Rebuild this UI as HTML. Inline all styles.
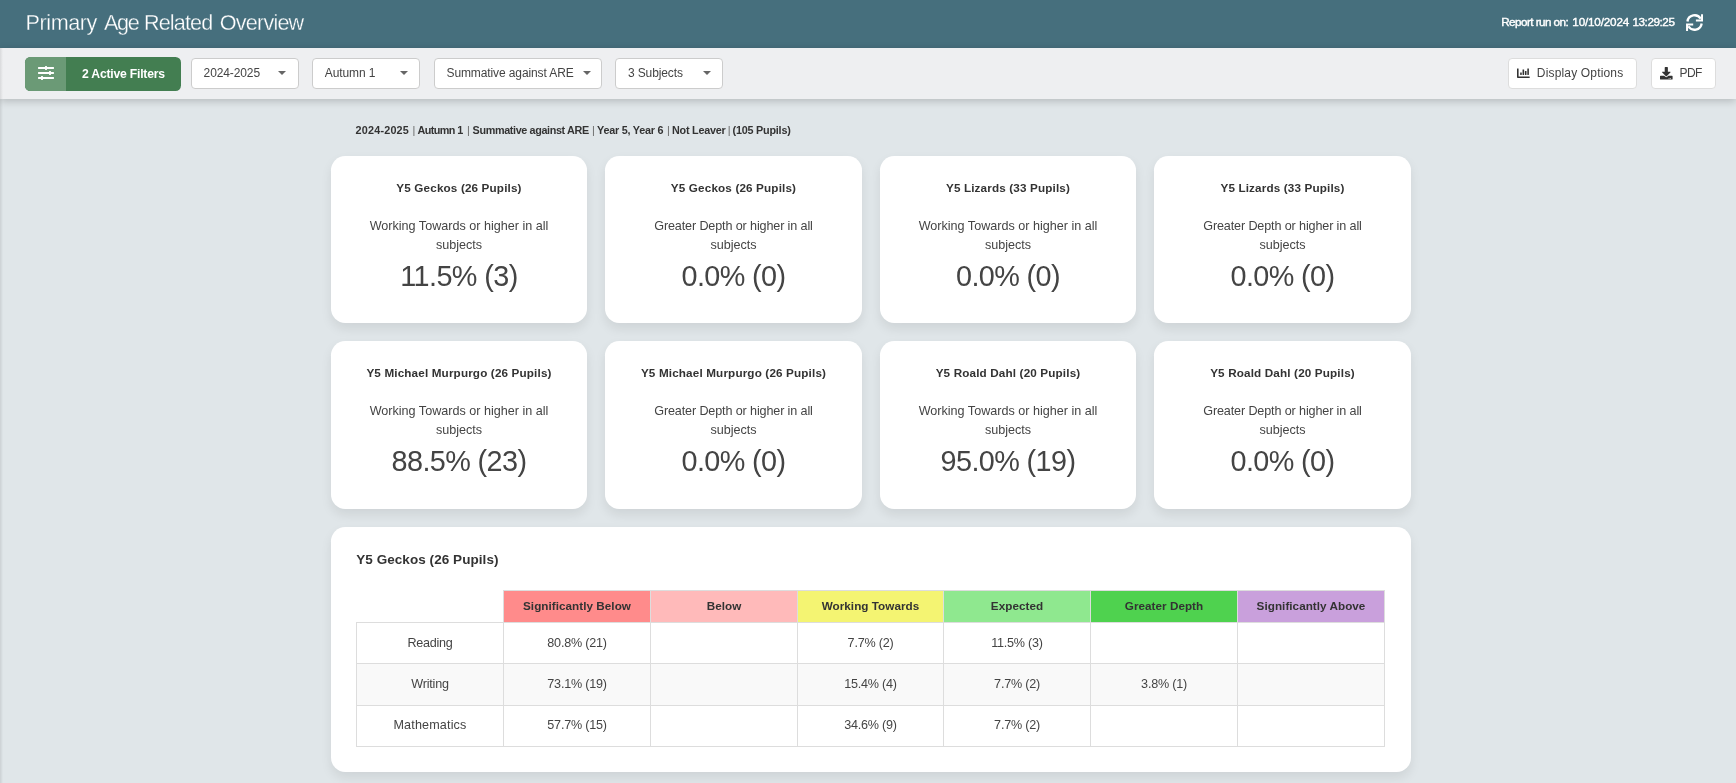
<!DOCTYPE html>
<html>
<head>
<meta charset="utf-8">
<title>Primary Age Related Overview</title>
<style>
html,body{margin:0;padding:0;}
body{width:1736px;height:783px;overflow:hidden;position:relative;background:#e0e6e9;font-family:"Liberation Sans",sans-serif;font-size:12px;line-height:1;color:#333;}
div{box-sizing:border-box;}
#root{position:absolute;left:0;top:0;width:1736px;height:783px;overflow:hidden;will-change:transform;}
.abs{position:absolute;}
.t{position:absolute;white-space:nowrap;line-height:1;}
#hdr{left:0;top:0;width:1736px;height:48px;background:#466f7d;}
#bar{left:0;top:48px;width:1736px;height:51px;background:#eeeff1;box-shadow:0 2px 8px rgba(0,0,0,0.20);}
.tw{top:12.1px;font-size:21.6px;color:#fff;-webkit-text-stroke:0.3px #466f7d;}
.rw{top:16.4px;font-size:11.7px;letter-spacing:-0.4px;color:#fff;font-weight:normal;-webkit-text-stroke:0.4px #fff;}
#fbtn{left:25px;top:57px;width:156px;height:34px;border-radius:5.5px;background:#437e51;overflow:hidden;}
#fbtn .ic{position:absolute;left:0;top:0;width:40.8px;height:34px;background:#6b9a76;}
#fbtn .lb{left:57px;top:10.5px;font-size:12.2px;letter-spacing:-0.21px;font-weight:bold;color:#fff;}
.dd{position:absolute;top:58px;height:31px;background:#fff;border:1px solid #ccc;border-radius:4px;}
.dd .t{top:7.9px;font-size:12px;letter-spacing:-0.11px;color:#444;}
.dd .ar{position:absolute;top:11.8px;width:0;height:0;border-left:4.1px solid transparent;border-right:4.1px solid transparent;border-top:4.3px solid #666;}
.btn{position:absolute;top:58px;height:31px;background:#fff;border:1px solid #ddd;border-radius:4px;}
.btn .t{top:7.9px;font-size:12px;color:#444;}
.cr{top:124.7px;font-size:10.8px;font-weight:bold;color:#333;}
.cp{top:124.7px;font-size:10.8px;color:#666;}
.card{position:absolute;width:256.5px;height:166.7px;background:#fff;border-radius:14.4px;box-shadow:0 5.4px 11px rgba(0,0,0,0.08);}
.card div{position:absolute;left:0;width:100%;text-align:center;white-space:nowrap;}
.card .h{top:26.3px;font-size:11.7px;font-weight:bold;letter-spacing:0.15px;color:#333;line-height:1;}
.card .d{top:61.2px;font-size:12.6px;color:#444;line-height:18.7px;}
.card .n{top:106.3px;font-size:28.8px;letter-spacing:-0.6px;color:#444;line-height:1;}
#tc{left:331px;top:527px;width:1080px;height:245px;background:#fff;border-radius:14.4px;box-shadow:0 5.4px 11px rgba(0,0,0,0.08);}
#tct{left:356.2px;top:553.0px;font-size:13.5px;letter-spacing:0.06px;font-weight:bold;color:#333;}
.vl{position:absolute;width:1px;background:#ddd;}
.hl{position:absolute;height:1px;background:#ddd;}
.th{position:absolute;text-align:center;font-size:11.7px;font-weight:bold;letter-spacing:0.04px;color:#333;line-height:1;white-space:nowrap;border:1px solid #ddd;}
.td{position:absolute;text-align:center;font-size:12.6px;color:#444;line-height:1;white-space:nowrap;}
.num{letter-spacing:-0.23px;}
svg{position:absolute;display:block;}
</style>
</head>
<body>
<div id="root">
<div id="hdr" class="abs"></div>
<div id="bar" class="abs"></div>
<div class="abs" style="left:0;top:48px;width:2.5px;height:735px;background:linear-gradient(to right,rgba(0,0,0,0.09),rgba(0,0,0,0));"></div>
<div class="t tw" style="left:25.6px;letter-spacing:-0.45px;">Primary</div>
<div class="t tw" style="left:104.0px;letter-spacing:-1.34px;">Age</div>
<div class="t tw" style="left:143.9px;letter-spacing:-0.84px;">Related</div>
<div class="t tw" style="left:219.8px;letter-spacing:-0.8px;">Overview</div>
<div class="t rw" style="left:1501.2px;letter-spacing:-0.55px;">Report run on:</div>
<div class="t rw" style="left:1572.3px;letter-spacing:-0.17px;">10/10/2024</div>
<div class="t rw" style="left:1632.4px;letter-spacing:-0.42px;">13:29:25</div>
<svg style="left:1685.9px;top:13.8px;" width="17.2" height="17.2" viewBox="0 0 17.2 17.2" fill="none" stroke="#fff" stroke-width="2"><path stroke-width="2.3" d="M1.42 7.5A7.2 7.2 0 0 1 14.7 4.75"/><path d="M9.9 6.42H16.05V0.3"/><path stroke-width="2.3" d="M15.68 9.5A7.2 7.2 0 0 1 2.4 12.25"/><path d="M7.2 10.58H1.05V16.9"/></svg>
<div id="fbtn" class="abs"><div class="ic"></div><div class="t lb" id="fl">2 Active Filters</div></div>
<svg style="left:37.9px;top:64.9px;" width="16" height="16" viewBox="0 0 512 512"><path fill="#fff" d="M496 384H160v-16c0-8.800-7.200-16-16-16h-32c-8.800 0-16 7.200-16 16v16H16c-8.800 0-16 7.200-16 16v32c0 8.800 7.200 16 16 16h80v16c0 8.800 7.200 16 16 16h32c8.800 0 16-7.200 16-16v-16h336c8.800 0 16-7.200 16-16v-32c0-8.800-7.200-16-16-16zm0-160h-80v-16c0-8.800-7.200-16-16-16h-32c-8.800 0-16 7.200-16 16v16H16c-8.800 0-16 7.200-16 16v32c0 8.800 7.200 16 16 16h336v16c0 8.800 7.200 16 16 16h32c8.800 0 16-7.200 16-16v-16h80c8.800 0 16-7.200 16-16v-32c0-8.800-7.200-16-16-16zm0-160H288V48c0-8.800-7.200-16-16-16h-32c-8.800 0-16 7.200-16 16v16H16C7.200 64 0 71.200 0 80v32c0 8.800 7.200 16 16 16h208v16c0 8.800 7.200 16 16 16h32c8.800 0 16-7.200 16-16v-16h208c8.800 0 16-7.200 16-16V80c0-8.800-7.200-16-16-16z"/></svg>
<div class="dd" style="left:191px;width:108.0px;"><div class="t" id="d1" style="left:11.6px;">2024-2025</div><div class="ar" style="left:86.4px;"></div></div>
<div class="dd" style="left:312px;width:108.0px;"><div class="t" id="d2" style="left:11.8px;">Autumn 1</div><div class="ar" style="left:87.2px;"></div></div>
<div class="dd" style="left:434px;width:168.0px;"><div class="t" id="d3" style="left:11.5px;">Summative against ARE</div><div class="ar" style="left:147.5px;"></div></div>
<div class="dd" style="left:615px;width:108.0px;"><div class="t" id="d4" style="left:11.9px;">3 Subjects</div><div class="ar" style="left:87.4px;"></div></div>
<div class="btn" style="left:1508px;width:129px;"><div class="t" id="b1" style="left:27.8px;letter-spacing:0.17px;">Display Options</div></div>
<svg style="left:1516.9px;top:66.6px;" width="12.7" height="12.7" viewBox="0 0 512 512"><path fill="#333" d="M332.8 320h38.4c6.4 0 12.8-6.4 12.8-12.8V172.800c0-6.400-6.400-12.800-12.800-12.800h-38.400c-6.400 0-12.800 6.400-12.800 12.800v134.400c0 6.400 6.400 12.800 12.800 12.800zm96 0h38.400c6.400 0 12.800-6.400 12.800-12.800V76.800c0-6.400-6.400-12.800-12.800-12.800h-38.400c-6.400 0-12.800 6.400-12.800 12.800v230.400c0 6.400 6.400 12.800 12.800 12.800zm-288 0h38.400c6.400 0 12.800-6.400 12.800-12.800v-70.400c0-6.400-6.400-12.800-12.800-12.800h-38.400c-6.400 0-12.800 6.400-12.800 12.800v70.400c0 6.400 6.400 12.800 12.800 12.800zm96 0h38.400c6.400 0 12.800-6.400 12.800-12.800V108.800c0-6.400-6.400-12.800-12.800-12.800h-38.400c-6.400 0-12.800 6.400-12.800 12.800v198.400c0 6.400 6.400 12.800 12.800 12.800zM496 384H64V80c0-8.840-7.160-16-16-16H16C7.160 64 0 71.160 0 80v336c0 17.670 14.330 32 32 32h464c8.840 0 16-7.160 16-16v-32c0-8.840-7.160-16-16-16z"/></svg>
<div class="btn" style="left:1651px;width:65px;"><div class="t" id="b2" style="left:27.4px;letter-spacing:-0.5px;">PDF</div></div>
<svg style="left:1660.2px;top:67.1px;" width="12.6" height="12.6" viewBox="0 0 512 512"><path fill="#333" d="M216 0h80c13.3 0 24 10.7 24 24v168h87.7c17.8 0 26.7 21.5 14.1 34.1L269.7 378.3c-7.5 7.5-19.8 7.5-27.3 0L90.1 226.1c-12.6-12.6-3.7-34.1 14.1-34.1H192V24c0-13.3 10.7-24 24-24zm296 376v112c0 13.3-10.7 24-24 24H24c-13.3 0-24-10.7-24-24V376c0-13.300 10.700-24 24-24h146.700l49 49c20.100 20.100 52.500 20.100 72.600 0l49-49H488c13.300 0 24 10.700 24 24zm-124 88c0-11-9-20-20-20s-20 9-20 20 9 20 20 20 20-9 20-20zm64 0c0-11-9-20-20-20s-20 9-20 20 9 20 20 20 20-9 20-20z"/></svg>
<div class="t cr" style="left:355.6px;letter-spacing:0.2px;">2024-2025</div>
<div class="t cr" style="left:417.6px;letter-spacing:-0.59px;">Autumn 1</div>
<div class="t cr" style="left:472.6px;letter-spacing:-0.365px;">Summative against ARE</div>
<div class="t cr" style="left:597.0px;letter-spacing:-0.22px;">Year 5, Year 6</div>
<div class="t cr" style="left:672.0px;letter-spacing:-0.22px;">Not Leaver</div>
<div class="t cr" style="left:732.6px;letter-spacing:-0.22px;">(105 Pupils)</div>
<div class="t cp" style="left:412.4px;">|</div>
<div class="t cp" style="left:467.0px;">|</div>
<div class="t cp" style="left:592.1px;">|</div>
<div class="t cp" style="left:666.9px;">|</div>
<div class="t cp" style="left:727.7px;">|</div>
<div class="card" style="left:331px;top:156px;width:256px;height:166.7px;"><div class="h" id="ch0">Y5 Geckos (26 Pupils)</div><div class="d"><span id="cd0">Working Towards or higher in all</span><br><span id="ce0">subjects</span></div><div class="n"><span id="cn0">11.5% (3)</span></div></div>
<div class="card" style="left:605px;top:156px;width:257px;height:166.7px;"><div class="h" id="ch1">Y5 Geckos (26 Pupils)</div><div class="d"><span id="cd1" style="letter-spacing:-0.13px">Greater Depth or higher in all</span><br><span id="ce1">subjects</span></div><div class="n"><span id="cn1">0.0% (0)</span></div></div>
<div class="card" style="left:880px;top:156px;width:256px;height:166.7px;"><div class="h" id="ch2">Y5 Lizards (33 Pupils)</div><div class="d"><span id="cd2">Working Towards or higher in all</span><br><span id="ce2">subjects</span></div><div class="n"><span id="cn2">0.0% (0)</span></div></div>
<div class="card" style="left:1154px;top:156px;width:257px;height:166.7px;"><div class="h" id="ch3">Y5 Lizards (33 Pupils)</div><div class="d"><span id="cd3" style="letter-spacing:-0.13px">Greater Depth or higher in all</span><br><span id="ce3">subjects</span></div><div class="n"><span id="cn3">0.0% (0)</span></div></div>
<div class="card" style="left:331px;top:341px;width:256px;height:168px;"><div class="h" id="ch4">Y5 Michael Murpurgo (26 Pupils)</div><div class="d"><span id="cd4">Working Towards or higher in all</span><br><span id="ce4">subjects</span></div><div class="n"><span id="cn4">88.5% (23)</span></div></div>
<div class="card" style="left:605px;top:341px;width:257px;height:168px;"><div class="h" id="ch5">Y5 Michael Murpurgo (26 Pupils)</div><div class="d"><span id="cd5" style="letter-spacing:-0.13px">Greater Depth or higher in all</span><br><span id="ce5">subjects</span></div><div class="n"><span id="cn5">0.0% (0)</span></div></div>
<div class="card" style="left:880px;top:341px;width:256px;height:168px;"><div class="h" id="ch6">Y5 Roald Dahl (20 Pupils)</div><div class="d"><span id="cd6">Working Towards or higher in all</span><br><span id="ce6">subjects</span></div><div class="n"><span id="cn6">95.0% (19)</span></div></div>
<div class="card" style="left:1154px;top:341px;width:257px;height:168px;"><div class="h" id="ch7">Y5 Roald Dahl (20 Pupils)</div><div class="d"><span id="cd7" style="letter-spacing:-0.13px">Greater Depth or higher in all</span><br><span id="ce7">subjects</span></div><div class="n"><span id="cn7">0.0% (0)</span></div></div>
<div id="tc" class="abs"></div>
<div id="tct" class="t">Y5 Geckos (26 Pupils)</div>
<div class="abs" style="left:356px;top:663px;width:1029.00px;height:42.0px;background:#f9f9f9;"></div>
<div class="th" style="left:503.00px;top:590px;width:148.00px;height:33.0px;background:#ff8b8b;"><span class="t" id="th0" style="position:relative;top:8.6px;">Significantly Below</span></div>
<div class="th" style="left:650.00px;top:590px;width:148.00px;height:33.0px;background:#ffbaba;"><span class="t" id="th1" style="position:relative;top:8.6px;">Below</span></div>
<div class="th" style="left:797.00px;top:590px;width:147.00px;height:33.0px;background:#f4f472;"><span class="t" id="th2" style="position:relative;top:8.6px;">Working Towards</span></div>
<div class="th" style="left:943.00px;top:590px;width:148.00px;height:33.0px;background:#8fe88f;"><span class="t" id="th3" style="position:relative;top:8.6px;">Expected</span></div>
<div class="th" style="left:1090.00px;top:590px;width:148.00px;height:33.0px;background:#4fd24f;"><span class="t" id="th4" style="position:relative;top:8.6px;">Greater Depth</span></div>
<div class="th" style="left:1237.00px;top:590px;width:148.00px;height:33.0px;background:#c9a0dc;"><span class="t" id="th5" style="position:relative;top:8.6px;">Significantly Above</span></div>
<div class="hl" style="left:356px;top:622px;width:1029.00px;"></div>
<div class="hl" style="left:356px;top:663px;width:1029.00px;"></div>
<div class="hl" style="left:356px;top:705px;width:1029.00px;"></div>
<div class="hl" style="left:356px;top:746px;width:1029.00px;"></div>
<div class="vl" style="left:356.00px;top:622px;height:125.0px;"></div>
<div class="vl" style="left:503.00px;top:622px;height:125.0px;"></div>
<div class="vl" style="left:650.00px;top:622px;height:125.0px;"></div>
<div class="vl" style="left:797.00px;top:622px;height:125.0px;"></div>
<div class="vl" style="left:943.00px;top:622px;height:125.0px;"></div>
<div class="vl" style="left:1090.00px;top:622px;height:125.0px;"></div>
<div class="vl" style="left:1237.00px;top:622px;height:125.0px;"></div>
<div class="vl" style="left:1384.00px;top:622px;height:125.0px;"></div>
<div class="td" style="left:356.00px;top:637.2px;width:148.00px;letter-spacing:-0.29px;"><span id="r0">Reading</span></div>
<div class="td num" style="left:503.00px;top:637.2px;width:148.00px;"><span id="v0_0">80.8% (21)</span></div>
<div class="td num" style="left:797.00px;top:637.2px;width:147.00px;"><span id="v0_2">7.7% (2)</span></div>
<div class="td num" style="left:943.00px;top:637.2px;width:148.00px;"><span id="v0_3">11.5% (3)</span></div>
<div class="td" style="left:356.00px;top:678.3px;width:148.00px;letter-spacing:-0.2px;"><span id="r1">Writing</span></div>
<div class="td num" style="left:503.00px;top:678.3px;width:148.00px;"><span id="v1_0">73.1% (19)</span></div>
<div class="td num" style="left:797.00px;top:678.3px;width:147.00px;"><span id="v1_2">15.4% (4)</span></div>
<div class="td num" style="left:943.00px;top:678.3px;width:148.00px;"><span id="v1_3">7.7% (2)</span></div>
<div class="td num" style="left:1090.00px;top:678.3px;width:148.00px;"><span id="v1_4">3.8% (1)</span></div>
<div class="td" style="left:356.00px;top:718.9px;width:148.00px;letter-spacing:0.15px;"><span id="r2">Mathematics</span></div>
<div class="td num" style="left:503.00px;top:718.9px;width:148.00px;"><span id="v2_0">57.7% (15)</span></div>
<div class="td num" style="left:797.00px;top:718.9px;width:147.00px;"><span id="v2_2">34.6% (9)</span></div>
<div class="td num" style="left:943.00px;top:718.9px;width:148.00px;"><span id="v2_3">7.7% (2)</span></div>
</div>
</body>
</html>
